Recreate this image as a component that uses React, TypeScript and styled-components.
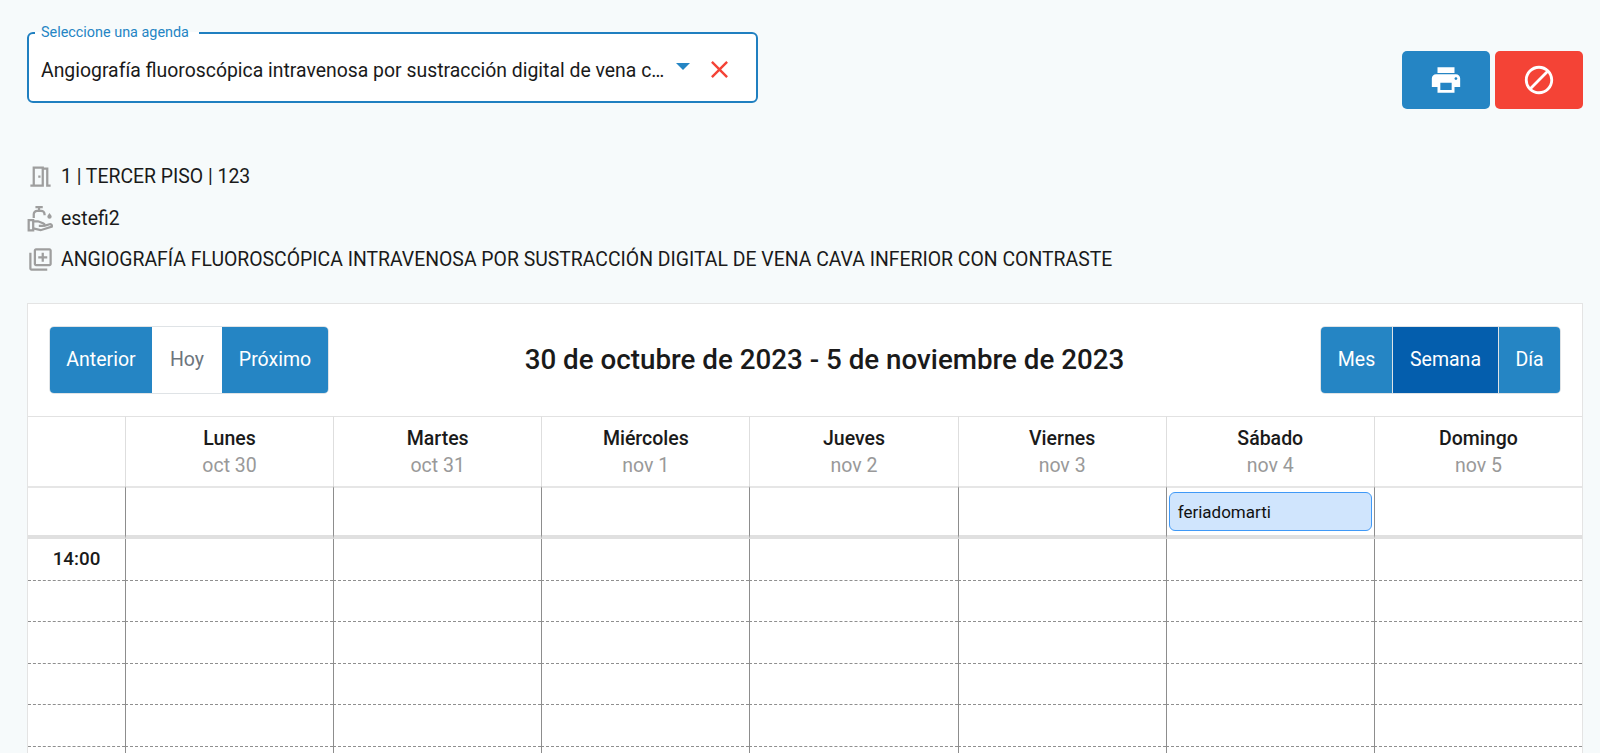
import React from 'react';
import styled, { createGlobalStyle } from 'styled-components';
import {
  MdBlock,
  MdClose,
  MdOutlineLibraryAdd,
  MdOutlineMeetingRoom,
  MdPrint,
} from 'react-icons/md';

const GlobalStyle = createGlobalStyle`
  html, body {
    margin: 0;
    padding: 0;
    background: #f6fafb;
    font-family: Roboto, "Liberation Sans", sans-serif;
    color: #1a1a1a;
  }
  * { box-sizing: border-box; }
`;

const Page = styled.div`
  height: 753px;
  overflow: hidden;
  padding: 26px 17px 0 27px;
`;

const TopRow = styled.div`
  display: flex;
  justify-content: space-between;
  align-items: flex-start;
  height: 83px;
`;

const SelectBox = styled.fieldset`
  width: 731px;
  height: 77px;
  margin: 0;
  padding: 0 14px 0 12px;
  border: 2.5px solid #1f7fc0;
  border-radius: 6px;
  background: #fff;
  display: flex;
`;

const SelectLabel = styled.legend`
  margin-left: -6px;
  padding: 0 10px 0 6px;
  font-size: 14.4px;
  line-height: 13px;
  color: #2585c4;
`;

const SelectBody = styled.div`
  display: flex;
  align-items: center;
  width: 100%;
  height: 100%;
  padding-top: 2px;
`;

const SelectValue = styled.span`
  width: 629px;
  font-size: 19.4px;
  line-height: 24px;
  white-space: nowrap;
  overflow: hidden;
  text-overflow: ellipsis;
`;

const Caret = styled.svg`
  width: 14px;
  height: 7px;
  margin: -9px 0 0 6px;
  fill: #2585c4;
`;

const ClearButton = styled.span`
  display: flex;
  margin-left: 15px;
  color: #f44336;
  font-size: 29px;
  margin-top: -4px;
`;

const Actions = styled.div`
  display: flex;
  gap: 5px;
  margin-top: 25px;
`;

const ActionButton = styled.button<{ $danger?: boolean }>`
  width: 88px;
  height: 58px;
  border: 0;
  padding: 0;
  border-radius: 5px;
  display: flex;
  align-items: center;
  justify-content: center;
  color: #fff;
  background: ${(p) => (p.$danger ? '#f44336' : '#2585c4')};
`;

const InfoList = styled.div`
  margin-top: 47px;
`;

const InfoRow = styled.div`
  display: flex;
  align-items: center;
  height: 41.5px;
  font-size: 19.4px;
  white-space: nowrap;
  svg {
    flex: none;
    width: 27px;
    height: 27px;
    color: #9e9e9e;
    margin-right: 7px;
  }
`;

const Calendar = styled.div`
  margin-top: 22.5px;
  background: #fff;
  border: 1px solid #e4e4e4;
`;

const Toolbar = styled.div`
  display: flex;
  justify-content: space-between;
  align-items: center;
  height: 112px;
  padding: 0 21px 1px;
`;

const ButtonGroup = styled.div`
  display: flex;
  height: 68px;
  border: 1px solid #dfe3e6;
  border-radius: 5px;
  overflow: hidden;
`;

const ToolButton = styled.button<{ $kind?: 'light' | 'active'; $w: number; $divider?: boolean }>`
  width: ${(p) => p.$w}px;
  border: 0;
  padding: 0;
  font: 400 19.5px Roboto, sans-serif;
  border-left: ${(p) => (p.$divider ? '1px solid #dfe3e6' : '0')};
  color: ${(p) => (p.$kind === 'light' ? '#6c757d' : '#fff')};
  background: ${(p) =>
    p.$kind === 'light' ? '#fff' : p.$kind === 'active' ? '#045ead' : '#2585c4'};
`;

const Title = styled.h2`
  margin: 0;
  font-size: 27.75px;
  font-weight: 500;
  color: #1a1a1a;
`;

const Grid = styled.div`
  display: grid;
  grid-template-columns: 97px repeat(7, 1fr);
`;

const HeadCell = styled.div<{ $first?: boolean }>`
  height: 70px;
  border-top: 1px solid #e2e2e2;
  border-left: ${(p) => (p.$first ? '0' : '1px solid #dedede')};
  display: flex;
  flex-direction: column;
  align-items: center;
  padding-top: 10px;
`;

const DayName = styled.div`
  font-size: 19.5px;
  font-weight: 500;
  line-height: 24px;
  color: #1a1a1a;
`;

const DayDate = styled.div`
  font-size: 19.5px;
  line-height: 29px;
  color: #999;
`;

const AllDayCell = styled.div<{ $first?: boolean }>`
  height: 53px;
  padding: 4px 2px 4px;
  border-top: 2px solid #e6e6e6;
  border-bottom: 4px solid #e0e0e0;
  border-left: ${(p) => (p.$first ? '0' : '1px solid #8d8d8d')};
`;

const EventChip = styled.div`
  display: flex;
  align-items: center;
  height: 39px;
  padding-left: 8px;
  border: 1.5px solid #3f99f7;
  border-radius: 6px;
  background: #d0e5fd;
  font-size: 17px;
  color: #111;
`;

const SlotCell = styled.div<{ $first?: boolean }>`
  height: 41.5px;
  border-bottom: 1px dashed #8f8f8f;
  border-left: ${(p) => (p.$first ? '0' : '1px solid #8d8d8d')};
  display: flex;
  align-items: center;
  justify-content: center;
`;

const TimeLabel = styled.span`
  font-size: 18.8px;
  font-weight: 500;
  color: #1a1a1a;
`;

const WashIcon = () => (
  <svg viewBox="0 0 24 24" fill="none" stroke="currentColor" strokeWidth="2">
    <path d="M7.5 1.8h6.5M10.7 1.8V5" />
    <path d="M6 11.5V8.2a3 3 0 0 1 3-3h3.6a3 3 0 0 1 3 3v1" />
    <path
      d="M20 7.2c-1.2 1.5-1.9 2.4-1.9 3.2a1.9 1.9 0 0 0 3.8 0c0-.8-.7-1.7-1.9-3.2z"
      fill="currentColor"
      stroke="none"
    />
    <path d="M1.5 13.5h4v9h-4z" />
    <path d="M5.5 14.5h4.3l5 2c1.1.4 1 2.1-.3 2.1h-4" />
    <path d="M5.5 20.8l6.6 1.6 10-3.2c.4-1.7-1-2.4-2-2.1l-5 1.5" />
  </svg>
);

const days = [
  { name: 'Lunes', date: 'oct 30' },
  { name: 'Martes', date: 'oct 31' },
  { name: 'Miércoles', date: 'nov 1' },
  { name: 'Jueves', date: 'nov 2' },
  { name: 'Viernes', date: 'nov 3' },
  { name: 'Sábado', date: 'nov 4', event: 'feriadomarti' },
  { name: 'Domingo', date: 'nov 5' },
];

const slots = [0, 1, 2, 3, 4, 5];

export default function App() {
  return (
    <Page>
      <GlobalStyle />
      <TopRow>
        <SelectBox>
          <SelectLabel>Seleccione una agenda</SelectLabel>
          <SelectBody>
            <SelectValue>
              Angiografía fluoroscópica intravenosa por sustracción digital de vena cava inferior con contraste
            </SelectValue>
            <Caret viewBox="0 0 14 7">
              <path d="M0 0h14L7 7z" />
            </Caret>
            <ClearButton>
              <MdClose />
            </ClearButton>
          </SelectBody>
        </SelectBox>
        <Actions>
          <ActionButton>
            <MdPrint size={34} />
          </ActionButton>
          <ActionButton $danger>
            <MdBlock size={34} />
          </ActionButton>
        </Actions>
      </TopRow>

      <InfoList>
        <InfoRow>
          <MdOutlineMeetingRoom />1 | TERCER PISO | 123
        </InfoRow>
        <InfoRow>
          <WashIcon />estefi2
        </InfoRow>
        <InfoRow>
          <MdOutlineLibraryAdd />ANGIOGRAFÍA FLUOROSCÓPICA INTRAVENOSA POR SUSTRACCIÓN DIGITAL DE VENA CAVA INFERIOR CON CONTRASTE
        </InfoRow>
      </InfoList>

      <Calendar>
        <Toolbar>
          <ButtonGroup>
            <ToolButton $w={102}>Anterior</ToolButton>
            <ToolButton $w={70} $kind="light">Hoy</ToolButton>
            <ToolButton $w={106}>Próximo</ToolButton>
          </ButtonGroup>
          <Title>30 de octubre de 2023 - 5 de noviembre de 2023</Title>
          <ButtonGroup>
            <ToolButton $w={71}>Mes</ToolButton>
            <ToolButton $w={106} $kind="active" $divider>Semana</ToolButton>
            <ToolButton $w={62} $divider>Día</ToolButton>
          </ButtonGroup>
        </Toolbar>

        <Grid>
          <HeadCell $first />
          {days.map((d) => (
            <HeadCell key={d.name}>
              <DayName>{d.name}</DayName>
              <DayDate>{d.date}</DayDate>
            </HeadCell>
          ))}

          <AllDayCell $first />
          {days.map((d) => (
            <AllDayCell key={d.name}>
              {d.event && <EventChip>{d.event}</EventChip>}
            </AllDayCell>
          ))}

          {slots.map((s) => (
            <React.Fragment key={s}>
              <SlotCell $first>{s === 0 && <TimeLabel>14:00</TimeLabel>}</SlotCell>
              {days.map((d) => (
                <SlotCell key={d.name} />
              ))}
            </React.Fragment>
          ))}
        </Grid>
      </Calendar>
    </Page>
  );
}
